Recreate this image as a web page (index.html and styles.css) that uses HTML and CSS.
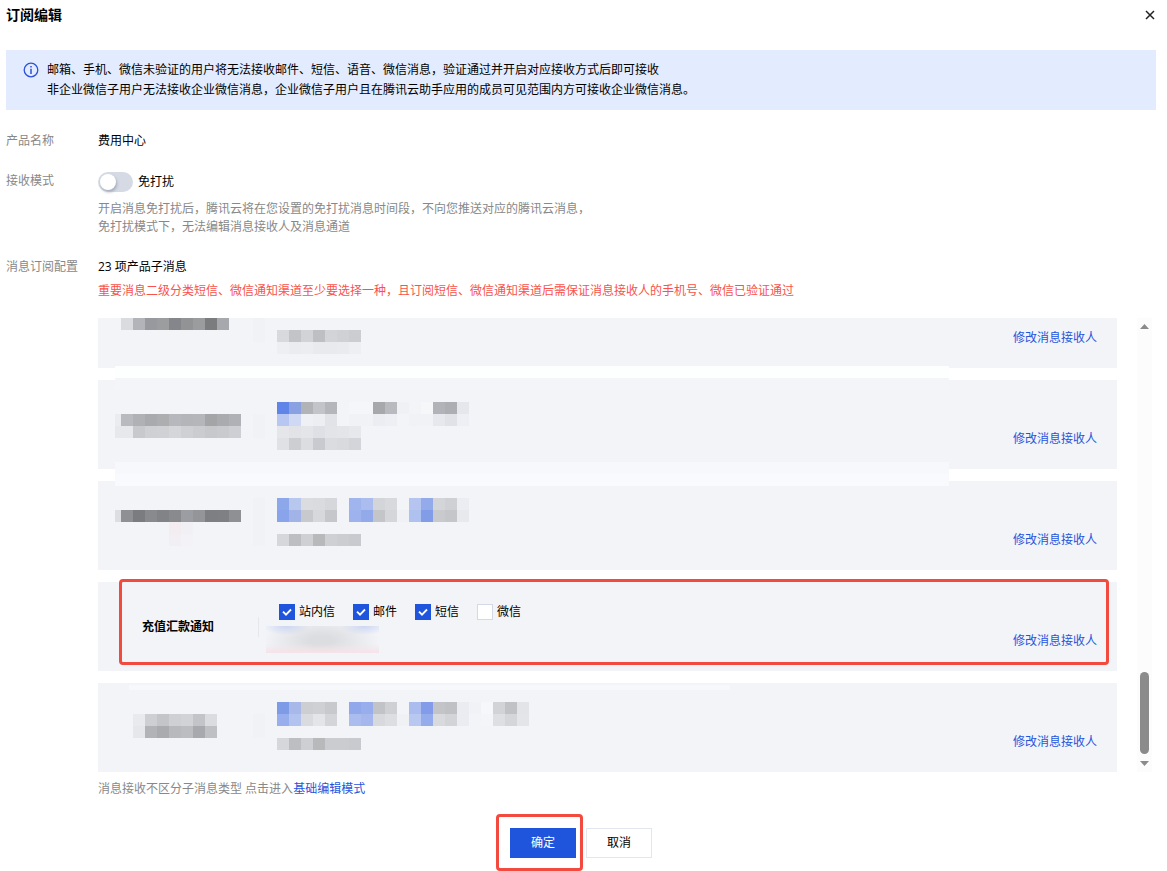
FILE: index.html
```html
<!DOCTYPE html>
<html lang="zh-CN">
<head>
<meta charset="utf-8">
<title>订阅编辑</title>
<link rel="stylesheet" href="styles.css">
</head>
<body>
<main class="dialog">
  <header class="dialog-head">
    <h1 class="title">订阅编辑</h1>
    <button class="close" type="button" aria-label="关闭">
      <svg width="10" height="10" viewBox="0 0 10 10"><path d="M1 1l8 8M9 1L1 9" fill="none" stroke="#222" stroke-width="1.500"/></svg>
    </button>
  </header>

  <section class="notice">
    <svg class="notice-icon" width="16" height="16" viewBox="0 0 16 16"><circle cx="8" cy="8" r="6.8" fill="none" stroke="#2b52d8" stroke-width="1.3"/><path d="M8 4v1.6M8 6.8V12" stroke="#2b52d8" stroke-width="1.5"/></svg>
    <p class="notice-text">邮箱、手机、微信未验证的用户将无法接收邮件、短信、语音、微信消息，验证通过并开启对应接收方式后即可接收<br>非企业微信子用户无法接收企业微信消息，企业微信子用户且在腾讯云助手应用的成员可见范围内方可接收企业微信消息。</p>
  </section>

  <form class="form">
    <div class="label">产品名称</div>
    <div class="value">费用中心</div>

    <div class="label">接收模式</div>
    <div class="value">
      <label class="switch-line"><input class="switch" type="checkbox" role="switch"><span>免打扰</span></label>
      <p class="hint">开启消息免打扰后，腾讯云将在您设置的免打扰消息时间段，不向您推送对应的腾讯云消息，<br>免打扰模式下，无法编辑消息接收人及消息通道</p>
    </div>

    <div class="label">消息订阅配置</div>
    <div class="value">
      <div>23 项产品子消息</div>
      <p class="warning">重要消息二级分类短信、微信通知渠道至少要选择一种，且订阅短信、微信通知渠道后需保证消息接收人的手机号、微信已验证通过</p>
      <div class="scroller">
        <div class="list">
          <div class="card card-cut"><a class="link" href="#">修改消息接收人</a></div>
          <div class="card"><a class="link" href="#">修改消息接收人</a></div>
          <div class="card"><a class="link" href="#">修改消息接收人</a></div>
          <div class="card">
            <strong class="name">充值汇款通知</strong>
            <div class="channels">
              <label class="check"><span class="box"><input type="checkbox" checked><svg width="16" height="16" viewBox="0 0 16 16"><path d="M4 7.6l3 3L12 5.5" fill="none" stroke="#fff" stroke-width="1.8"/></svg></span>站内信</label>
              <label class="check"><span class="box"><input type="checkbox" checked><svg width="16" height="16" viewBox="0 0 16 16"><path d="M4 7.6l3 3L12 5.5" fill="none" stroke="#fff" stroke-width="1.8"/></svg></span>邮件</label>
              <label class="check"><span class="box"><input type="checkbox" checked><svg width="16" height="16" viewBox="0 0 16 16"><path d="M4 7.6l3 3L12 5.5" fill="none" stroke="#fff" stroke-width="1.8"/></svg></span>短信</label>
              <label class="check"><span class="box"><input type="checkbox"></span>微信</label>
            </div>
            <a class="link" href="#">修改消息接收人</a>
            <span class="smudge"></span>
            <span class="mark mark-card"></span>
          </div>
          <div class="card"><a class="link" href="#">修改消息接收人</a></div>
          <svg class="mosaic" id="mosaic" width="860" height="454" shape-rendering="crispEdges" aria-hidden="true"></svg>
        </div>
        <div class="track" aria-hidden="true">
          <svg width="9" height="5" viewBox="0 0 9 5"><path d="M0 5L4.500 0L9 5z" fill="#8b8b8b"/></svg>
          <span class="thumb"></span>
          <svg width="9" height="5" viewBox="0 0 9 5"><path d="M0 0h9L4.500 5z" fill="#8b8b8b"/></svg>
        </div>
      </div>
      <p class="switch-mode">消息接收不区分子消息类型 点击进入<a class="link-inline" href="#">基础编辑模式</a></p>
    </div>
  </form>

  <footer class="actions">
    <span class="confirm-wrap"><button class="btn btn-primary" type="button">确定</button><span class="mark mark-btn"></span></span>
    <button class="btn" type="button">取消</button>
  </footer>
</main>
<script src="mosaic.js"></script>
</body>
</html>
```
FILE: styles.css
```css
* { box-sizing: border-box; }

body {
  margin: 0;
  background: #fff;
  color: #000;
  font-family: "Open Sans", "Noto Sans CJK SC", sans-serif;
  font-size: 12px;
  line-height: 20px;
}

p, h1 { margin: 0; }
a { color: #1f55dd; text-decoration: none; }
button, input { font: inherit; margin: 0; }

.dialog { padding: 5px 11px 0 6px; }

.dialog-head {
  display: flex;
  justify-content: space-between;
  align-items: center;
  margin-bottom: 25px;
}
.title { font-size: 14px; line-height: 20px; font-weight: 700; }
.close {
  display: grid;
  place-items: center;
  width: 12px;
  height: 20px;
  padding: 0;
  border: 0;
  background: none;
}

.notice {
  display: flex;
  gap: 8px;
  padding: 10px 17px;
  background: #e3ebff;
}
.notice-icon { flex: none; margin-top: 2px; }

.form {
  display: grid;
  grid-template-columns: 72px minmax(0, 1fr);
  column-gap: 20px;
  row-gap: 20px;
  margin-top: 21px;
}
.label { color: #888; white-space: nowrap; }

.switch-line { display: flex; align-items: center; gap: 5px; padding-top: 1px; width: max-content; }
.switch {
  appearance: none;
  display: grid;
  align-items: center;
  width: 35px;
  height: 20px;
  padding-left: 2px;
  border-radius: 10px;
  background: #d5dae4;
}
.switch::before {
  content: "";
  width: 16px;
  height: 16px;
  border-radius: 50%;
  background: #fff;
  box-shadow: 1px 2px 3px #a3abba;
}
.switch:checked { background: #1f55dd; padding-left: 17px; }
.hint { margin-top: 8px; padding-bottom: 1px; line-height: 18px; color: #888; }
.warning { margin-top: 4px; color: #f9524b; }

.scroller { display: flex; gap: 20px; margin: 17px 4px 0 0; }
.list {
  position: relative;
  flex: 1;
  display: flex;
  flex-direction: column;
  gap: 12px;
}
.card {
  position: relative;
  display: flex;
  align-items: center;
  min-height: 89px;
  padding: 20px 20px 20px 44px;
  background: #f2f4f8;
}
.card-cut { min-height: 50px; padding-top: 10px; }
.card .link { margin-left: auto; align-self: flex-end; }
.name { width: 117px; border-right: 1px solid #e5e7ed; }
.channels { display: flex; gap: 18px; margin-left: 20px; align-self: flex-start; }
.check { display: flex; align-items: center; gap: 4px; }
.box { display: grid; }
.box input, .box svg { grid-area: 1 / 1; }
.box svg { pointer-events: none; }
.box input {
  appearance: none;
  width: 16px;
  height: 16px;
  border: 1px solid #d3dae6;
  background: #fff;
}
.box input:checked { border-color: #1f55dd; background: #1f55dd; }
.box input:not(:checked) + svg { visibility: hidden; }

.smudge {
  position: absolute;
  left: 168px;
  top: 44px;
  width: 113px;
  height: 27px;
  background:
    radial-gradient(ellipse 24px 9px at 20px 0, #ccd6f2, transparent),
    radial-gradient(ellipse 24px 9px at 98px 0, #ccd6f2, transparent),
    linear-gradient(transparent 65%, #f5e3e8),
    radial-gradient(ellipse 58px 26px at 55px 15px, #dcdde0 20%, transparent);
}
.mosaic { position: absolute; left: 0; top: 0; pointer-events: none; }

.mark {
  position: absolute;
  border: 3px solid #f24a3f;
  border-radius: 4px;
  pointer-events: none;
}
.mark-card { inset: -3px 8px 6px 21px; }
.mark-btn { inset: -14px -7px -13px -14px; }

.track {
  display: flex;
  flex-direction: column;
  align-items: center;
  width: 15px;
  padding: 6px 0;
  background: #fcfcfc;
}
.thumb { width: 9px; height: 82px; margin: auto 0 7px; border-radius: 5px; background: #8b8b8b; }

.switch-mode { margin-top: 7px; color: #888; }

.actions { display: flex; justify-content: center; gap: 10px; margin-top: 29px; padding-bottom: 13px; }
.confirm-wrap { position: relative; display: flex; }
.btn {
  width: 66px;
  height: 30px;
  padding: 0;
  border: 1px solid #e3e6ee;
  background: #fff;
  color: #000;
}
.btn-primary { border-color: #1f55dd; background: #1f55dd; color: #fff; }
```
FILE: mosaic.js
```js
// Redacted cells: [x, y, colours], every cell is 12px square, "-" leaves a gap.
const rows = [
  [23, 0, "dadbdf b3b4b9 98999e 9c9d9f 85868c 929395 9b9c9e 7b7c7e a7a8ad"],
  [179, 12, "d8d9dd c3c4c8 d2d3d7 bebfc3 d3d4d8 d0d1d5 cccdd1"],
  [179, 24, "eeeff3 ebecf0 ecedf1 e9eaee e9eaee eaebef eeeff3"],
  [23, 96, "b9bac0 b0b1b4 a9aaad adaeb0 b7b8bd b4b5b9 b5b6ba a4a5a7 aaabaf b0b1b6"],
  [23, 108, "e7e8ec c8c9cd cfd0d4 d0d1d5 d5d6da cfd0d4 cbccd0 c7c8cc c9cace cecfd4"],
  [179, 84, "5e85e7 89a1e2 b2b3b7 c3c4c9 b5b6bb - f5f6f9 f5f6f9 a7a8ac b9babf f0f1f5 f3f4f8 f6f7f9 b2b3b8 adaeb3 e6e7ec"],
  [179, 96, "b7c7f1 cfd9f4 eff0f5 edeef2 e2e3e8 - f1f2f6 f1f2f6 ecedf2 eeeff4 f3f4f8 f1f2f6 f1f2f6 e7e8ed e1e2e7 eeeff4"],
  [179, 108, "e5e6ea e2e3e7 e4e5e9 dfe0e5 e3e4e8 e4e5e9 e7e8ec"],
  [179, 120, "e0e1e5 cdced2 dcdde1 c9cacf dbdce0 d9dade d4d5da"],
  [23, 192, "8f9093 7b7c7f 898a8d 828386 898a8d 9c9da3 949598 7e7f82 7f8083 8f9093"],
  [71, 204, "f3ecf1 f1f0f5"],
  [71, 216, "f1eff4 f2f2f7"],
  [179, 180, "8ca7ea b8c7ed dbdce0 dadbdf d6d7db - a0b5ed abbdee d4d5d9 d8d9dd - b6c5f0 93abeb d4d5d9 cfd0d4 ecedf2"],
  [179, 192, "89a4ea a2b4e7 c8c9cd d7d8dc c6c7cb - 9eb2ed 93aaea c4c5c9 d5d6da f0f1f5 afc1ef 819de8 c9cacd c5c6c9 e8e9ed"],
  [179, 216, "d6d7db bdbec1 cfd0d4 b8b9bb ced0d4 cccdd1 c9cacf"],
  [35, 396, "e9eaee cecfd3 c4c5c9 cfd0d4 d2d3d7 c3c4c8 dbdce0"],
  [35, 408, "e6e7eb b2b3b7 aaabaf b8b9bd bcbdc1 a8a9ae bfc0c4"],
  [179, 384, "7e9be8 a7b8e9 cdced2 cfd0d4 c8c9cd - 91a8eb 98adeb c2c3c7 cfd0d4 - abbcef 829ce9 c3c4c8 c0c1c5 ebecf1 f1f2f6 f6f7fa d2d3d7 c1c2c6 e3e4e8"],
  [179, 396, "99afed b2c3ef dadbdf e4e5e9 d4d5d9 - abbdef a5b7ec d8d9dd dddee2 f0f1f5 b9c8f1 95acec d9dade d3d4d8 ebecf1 - f4f5f9 dedfe3 d5d6da e4e5e9"],
  [179, 420, "d6d7db bdbec2 cecfd3 b8b9bb cbccd0 cbccd0 c9cacf"]
];

// Light strips over the list: [x, y, width, height, colour].
const strips = [
  [17, 48, 834, 12, "fdfffe"],
  [17, 60, 834, 12, "f3f5f9"],
  [17, 144, 834, 12, "f6f8fb"],
  [17, 156, 834, 12, "f9fafd"],
  [31, 367, 601, 5, "f7f8fb"],
  [155, 0, 12, 24, "f1f2f6"],
  [155, 96, 12, 24, "f1f2f6"],
  [155, 180, 12, 48, "f1f2f6"],
  [155, 396, 12, 24, "f1f2f6"],
  [17, 96, 6, 12, "ebecf0"],
  [17, 108, 6, 12, "e7e8ec"],
  [17, 192, 6, 12, "dddee2"]
];

const svg = document.getElementById("mosaic");

function addCell(x, y, width, height, colour) {
  const rect = document.createElementNS("http://www.w3.org/2000/svg", "rect");
  const attrs = { x, y, width, height, fill: "#" + colour };
  for (const key in attrs) rect.setAttribute(key, attrs[key]);
  svg.appendChild(rect);
}

strips.forEach(strip => addCell(...strip));
rows.forEach(([x, y, colours]) => {
  colours.split(" ").forEach((colour, i) => {
    if (colour !== "-") addCell(x + i * 12, y, 12, 12, colour);
  });
});
```
